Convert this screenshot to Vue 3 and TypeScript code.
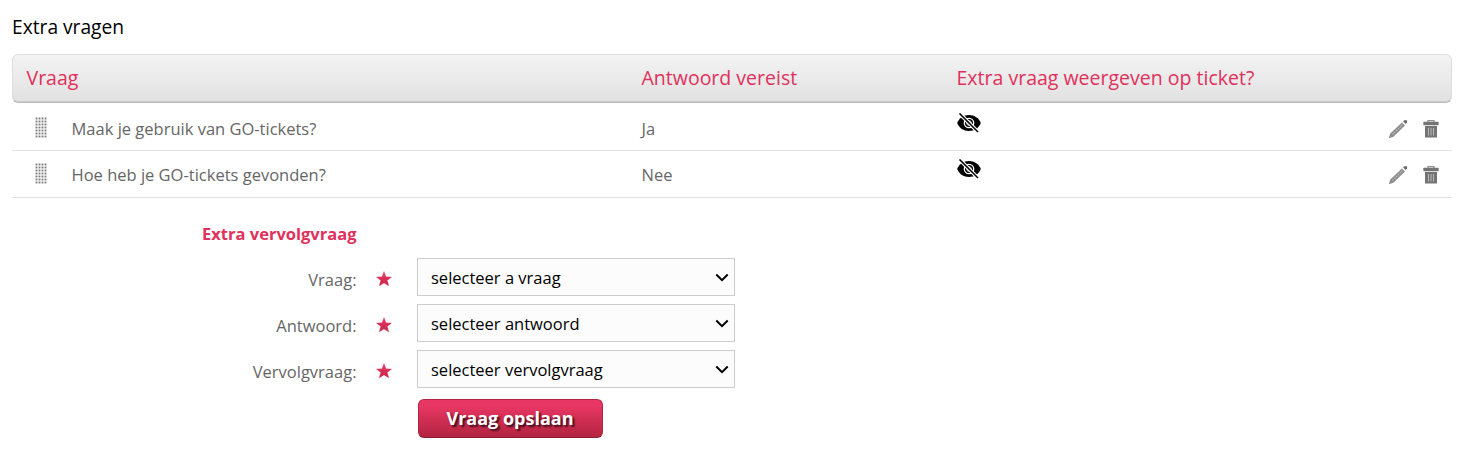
<script setup lang="ts">
interface Question {
  text: string
  required: string
}

interface Field {
  id: string
  label: string
  placeholder: string
}

const questions: Question[] = [
  { text: 'Maak je gebruik van GO-tickets?', required: 'Ja' },
  { text: 'Hoe heb je GO-tickets gevonden?', required: 'Nee' },
]

const fields: Field[] = [
  { id: 'vraag', label: 'Vraag:', placeholder: 'selecteer a vraag' },
  { id: 'antwoord', label: 'Antwoord:', placeholder: 'selecteer antwoord' },
  { id: 'vervolgvraag', label: 'Vervolgvraag:', placeholder: 'selecteer vervolgvraag' },
]
</script>

<template>
  <main class="page">
    <h1 class="title">Extra vragen</h1>

    <section class="table">
      <header class="grid head">
        <span>Vraag</span>
        <span>Antwoord vereist</span>
        <span>Extra vraag weergeven op ticket?</span>
      </header>
      <div v-for="q in questions" :key="q.text" class="grid row">
        <div class="question">
          <svg class="handle" width="12" height="21" viewBox="0 0 12 21">
            <defs>
              <pattern id="dots" width="3" height="3" patternUnits="userSpaceOnUse">
                <rect width="3" height="3" fill="#fafafa" />
                <rect x="0.6" y="0.600" width="1.800" height="1.800" fill="#7c7c7c" />
              </pattern>
            </defs>
            <rect width="12" height="21" fill="url(#dots)" />
          </svg>
          <span>{{ q.text }}</span>
        </div>
        <span>{{ q.required }}</span>
        <svg class="eye" width="24" height="20" viewBox="0 0 24 20">
          <path d="M0.2 10C2 5 6.600 2 12 2S22 5 23.800 10C22 15 17.400 18 12 18S2 15 .2 10Z" />
          <circle cx="12" cy="10" r="4.700" fill="none" stroke="#fff" stroke-width="1.300" />
          <circle cx="12" cy="10" r="2.300" fill="none" stroke="#fff" stroke-width=".8" />
          <path d="M2.500 .5 21 19" fill="none" stroke="#fff" stroke-width="3.800" />
          <path d="M2.500 .5 21 19" fill="none" stroke="#000" stroke-width="1.600" />
        </svg>
        <div class="actions">
          <svg width="20" height="20" viewBox="0 0 20 20">
            <path d="M.8 19.300 2.300 14.500 14 3.500 17 6.500 5.400 17.700Z" fill="#8c8c8c" />
            <path d="M4.500 15.500 14.500 5.800" stroke="#bdbdbd" stroke-width="1.200" stroke-dasharray="1.500 1" />
            <path d="M15.100 2.600 16.700 1 19.200 1.400 19 3.500 17.700 5.100Z" fill="#6c6c6c" />
          </svg>
          <svg width="16" height="20" viewBox="0 0 16 20">
            <path d="M5 3V1.600H11V3" fill="none" stroke="#909090" stroke-width="1.300" />
            <path d="M.4 3.300Q.4 2.800 1 2.800H15Q15.600 2.800 15.600 3.300V6.200H.4Z" fill="#747474" />
            <path d="M2 7H14V18.500H2Z" fill="#747474" />
            <path d="M5.500 9V16.500M8 9V16.500M10.500 9V16.500" stroke="#b9b9b9" stroke-width="1" />
          </svg>
        </div>
      </div>
    </section>

    <form class="form" @submit.prevent>
      <h2 class="subtitle">Extra vervolgvraag</h2>
      <div v-for="f in fields" :key="f.id" class="field">
        <label :for="f.id">{{ f.label }}</label>
        <svg class="star" width="16" height="16" viewBox="0 0 16 16">
          <defs>
            <linearGradient id="starFill" x2="0" y2="1">
              <stop stop-color="#ea3a68" />
              <stop offset="1" stop-color="#c52648" />
            </linearGradient>
          </defs>
          <path d="M8 .5 10 5.700 15.600 6 11.300 9.500 12.800 15 8 12 3.200 15 4.700 9.500 .4 6 6 5.700Z" fill="url(#starFill)" stroke="#e0315c" stroke-opacity=".25" />
        </svg>
        <div class="select">
          <select :id="f.id">
            <option>{{ f.placeholder }}</option>
          </select>
          <svg class="chevron" width="14" height="9" viewBox="0 0 14 9">
            <path d="M1.300 1.500 7 7.200 12.700 1.500" fill="none" stroke="#000" stroke-width="2" />
          </svg>
        </div>
      </div>
      <button class="save" type="submit">Vraag opslaan</button>
    </form>
  </main>
</template>

<style>
body {
  background: #fff;
}
</style>

<style scoped>
.page {
  box-sizing: border-box;
  width: 1470px;
  height: 456px;
  padding: 13px 18px 0 12px;
  overflow: hidden;
  font-family: "Open Sans", sans-serif;
  font-size: 16.500px;
  color: #666;
}
.title {
  margin: 0 0 13px;
  font-size: 19.200px;
  font-weight: 400;
  line-height: 28px;
  color: #000;
}
.grid {
  box-sizing: border-box;
  display: grid;
  grid-template-columns: 615px 315px 1fr auto;
}
.head {
  height: 49px;
  padding: 0 13.500px;
  border: 1px solid #dedede;
  border-bottom-color: #b8b8b8;
  border-radius: 6px;
  background: linear-gradient(#f3f3f3, #e1e1e1);
  box-shadow: inset 0 -1px #cdcdcd;
  font-size: 19.520px;
  line-height: 46px;
  color: #e0315c;
}
.row {
  height: 48px;
  padding: 14px 13px 0 14.500px;
  border-bottom: 1px solid #e2e2e2;
  line-height: 24px;
}
.row + .row {
  height: 47px;
  padding-top: 12px;
}
.question {
  display: flex;
  align-items: flex-start;
  padding-left: 8.500px;
}
.handle {
  margin-right: 24.500px;
}
.eye {
  margin-top: -4px;
}
.actions {
  display: flex;
  gap: 15px;
  margin-top: 2px;
}
.form {
  width: 740px;
}
.subtitle {
  width: 344.500px;
  margin: 23px 0 11px;
  font-size: 16.500px;
  font-weight: 700;
  line-height: 26px;
  text-align: right;
  color: #e0315c;
}
.field {
  display: flex;
  align-items: center;
  height: 38px;
  margin-bottom: 8px;
}
.field label {
  width: 344.500px;
  padding-top: 5px;
  text-align: right;
}
.star {
  margin: 3px 25px 0 19.500px;
}
.select {
  position: relative;
  width: 318px;
}
.select select {
  display: block;
  box-sizing: border-box;
  width: 100%;
  height: 38px;
  padding: 0 13px;
  border: 1px solid #ccc;
  border-radius: 0;
  background: #fcfcfc;
  appearance: none;
  font: inherit;
  color: #000;
}
.chevron {
  position: absolute;
  top: 15px;
  right: 6px;
  pointer-events: none;
}
.save {
  display: block;
  box-sizing: border-box;
  width: 185px;
  height: 39px;
  margin: 11px 0 0 406px;
  padding: 0 1px 1px 0;
  border: 1px solid #b02341;
  border-bottom-color: #8f1a30;
  border-radius: 6px;
  background: linear-gradient(#e83764 15%, #b3243f);
  font: 700 18px "Open Sans", sans-serif;
  color: #fff;
  text-shadow: 2px 2px 2px rgba(0, 0, 0, 0.7);
}
</style>
